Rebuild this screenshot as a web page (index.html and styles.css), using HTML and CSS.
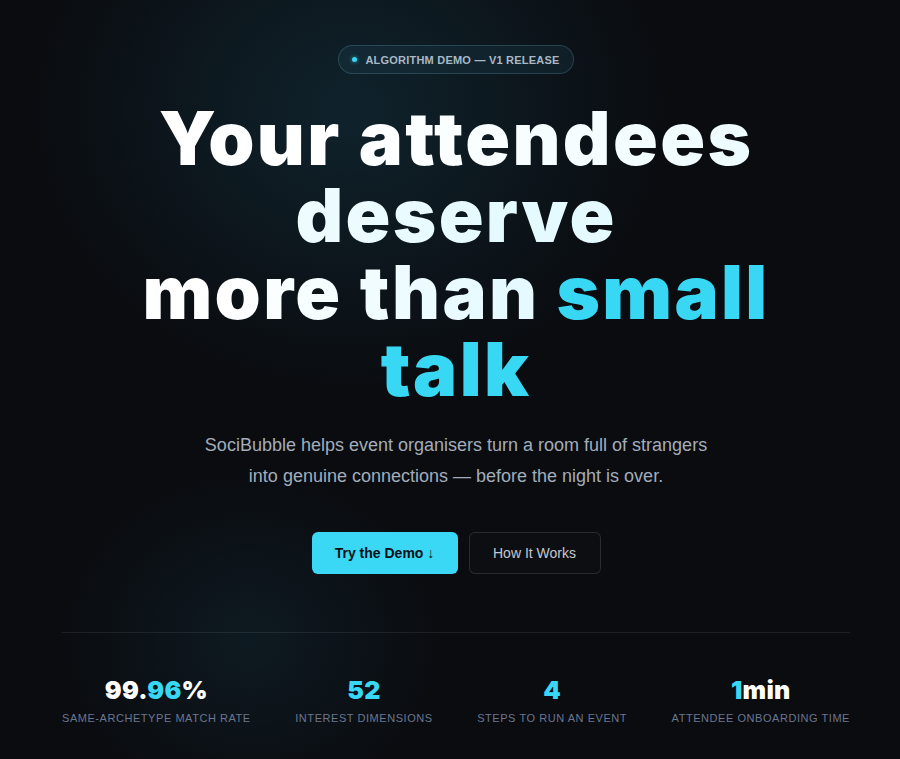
FILE: index.html
```html
<!DOCTYPE html>
<html lang="en">
<head>
<meta charset="utf-8">
<title>SociBubble</title>
<link rel="stylesheet" href="styles.css">
</head>
<body>
<main class="hero">
  <div class="badge"><span class="dot"></span>ALGORITHM DEMO — V1 RELEASE</div>
  <h1 class="title"><span class="light">Your attendees deserve</span><br><span class="light">more than </span><span class="accent">small talk</span></h1>
  <p class="lead">SociBubble helps event organisers turn a room full of strangers<br>into genuine connections — before the night is over.</p>
  <div class="actions">
    <a class="btn btn-primary" href="#">Try the Demo ↓</a>
    <a class="btn btn-ghost" href="#">How It Works</a>
  </div>
  <div class="stats">
    <div class="stat"><div class="num">99.<span class="accent">96</span>%</div><div class="label">Same-archetype match rate</div></div>
    <div class="stat"><div class="num"><span class="accent">52</span></div><div class="label">Interest dimensions</div></div>
    <div class="stat"><div class="num"><span class="accent">4</span></div><div class="label">Steps to run an event</div></div>
    <div class="stat"><div class="num"><span class="accent">1</span>min</div><div class="label">Attendee onboarding time</div></div>
  </div>
</main>
</body>
</html>
```

FILE: styles.css
```css
html, body {
  margin: 0;
  padding: 0;
  background: #0a0c10;
}
body {
  font-family: "Liberation Sans", Arial, sans-serif;
  color: #fff;
}
.hero {
  min-height: 759px;
  box-sizing: border-box;
  padding: 45px 50px 0 62px;
  display: flex;
  flex-direction: column;
  align-items: center;
  background:
    radial-gradient(ellipse 320px 280px at 350px 110px, rgba(22, 62, 78, 0.45), rgba(22, 62, 78, 0) 100%),
    radial-gradient(ellipse 190px 170px at 250px 640px, rgba(22, 55, 70, 0.32), rgba(22, 55, 70, 0) 100%),
    #0a0c10;
}
.badge {
  display: flex;
  align-items: center;
  gap: 8px;
  height: 29px;
  box-sizing: border-box;
  padding: 0 13px 0 13px;
  border: 1px solid rgba(120, 190, 210, 0.22);
  background: rgba(40, 90, 110, 0.18);
  border-radius: 15px;
  font-size: 11px;
  font-weight: 700;
  letter-spacing: 0.02em;
  color: #a9b9c5;
}
.dot {
  width: 5px;
  height: 5px;
  border-radius: 50%;
  background: #38d6f2;
  box-shadow: 0 0 4px rgba(56, 214, 242, 0.7);
}
.title {
  margin: 26px 0 0;
  max-width: 680px;
  text-align: center;
  font-family: Inter, "Liberation Sans", sans-serif;
  font-weight: 900;
  font-size: 74px;
  line-height: 77px;
  letter-spacing: 0.032em;
}
.light {
  background: linear-gradient(90deg, #ffffff 20%, #e4faff 90%);
  -webkit-background-clip: text;
  background-clip: text;
  color: transparent;
}
.accent {
  color: #38d8f4;
}
.lead {
  margin: 22px 0 0;
  text-align: center;
  font-size: 18px;
  line-height: 31px;
  color: #a3acba;
}
.actions {
  margin-top: 40px;
  display: flex;
  gap: 11px;
}
.btn {
  display: flex;
  align-items: center;
  justify-content: center;
  height: 42px;
  box-sizing: border-box;
  border-radius: 6px;
  font-size: 14px;
  text-decoration: none;
}
.btn-primary {
  width: 146px;
  background: #3ad8f5;
  color: #0a1016;
  font-weight: 700;
}
.btn-ghost {
  width: 132px;
  border: 1px solid rgba(255, 255, 255, 0.12);
  background: #0c0e12;
  color: #c3c8d0;
}
.stats {
  align-self: stretch;
  margin-top: 58px;
  border-top: 1px solid rgba(255, 255, 255, 0.08);
  padding-top: 43px;
  display: flex;
  justify-content: space-between;
}
.stat {
  text-align: center;
}
.num {
  font-family: Inter, "Liberation Sans", sans-serif;
  font-weight: 900;
  font-size: 25px;
  line-height: 28px;
  color: #fff;
  letter-spacing: 0.01em;
}
.label {
  margin-top: 8px;
  font-size: 11px;
  letter-spacing: 0.05em;
  text-transform: uppercase;
  color: #6b7690;
}
```
